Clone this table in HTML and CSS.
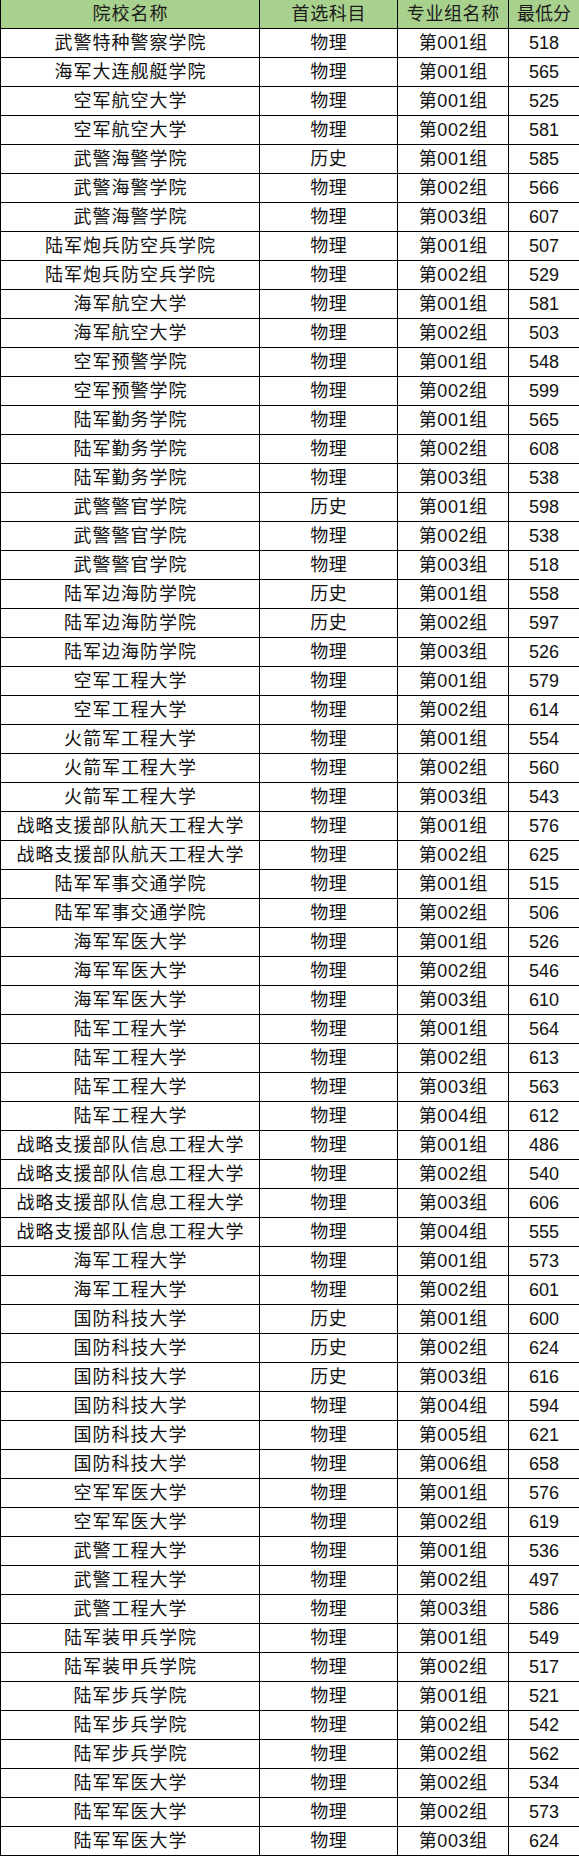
FILE: index.html
```html
<!DOCTYPE html>
<html lang="zh-CN">
<head>
<meta charset="utf-8">
<title>院校最低分</title>
<link rel="stylesheet" href="styles.css">
</head>
<body>
<table class="score-table">
<colgroup>
<col class="c-name"><col class="c-subj"><col class="c-group"><col class="c-score">
</colgroup>
<thead>
<tr><th class="name">院校名称</th><th>首选科目</th><th>专业组名称</th><th class="score">最低分</th></tr>
</thead>
<tbody>
<tr><td class="name">武警特种警察学院</td><td>物理</td><td>第001组</td><td class="score">518</td></tr>
<tr><td class="name">海军大连舰艇学院</td><td>物理</td><td>第001组</td><td class="score">565</td></tr>
<tr><td class="name">空军航空大学</td><td>物理</td><td>第001组</td><td class="score">525</td></tr>
<tr><td class="name">空军航空大学</td><td>物理</td><td>第002组</td><td class="score">581</td></tr>
<tr><td class="name">武警海警学院</td><td>历史</td><td>第001组</td><td class="score">585</td></tr>
<tr><td class="name">武警海警学院</td><td>物理</td><td>第002组</td><td class="score">566</td></tr>
<tr><td class="name">武警海警学院</td><td>物理</td><td>第003组</td><td class="score">607</td></tr>
<tr><td class="name">陆军炮兵防空兵学院</td><td>物理</td><td>第001组</td><td class="score">507</td></tr>
<tr><td class="name">陆军炮兵防空兵学院</td><td>物理</td><td>第002组</td><td class="score">529</td></tr>
<tr><td class="name">海军航空大学</td><td>物理</td><td>第001组</td><td class="score">581</td></tr>
<tr><td class="name">海军航空大学</td><td>物理</td><td>第002组</td><td class="score">503</td></tr>
<tr><td class="name">空军预警学院</td><td>物理</td><td>第001组</td><td class="score">548</td></tr>
<tr><td class="name">空军预警学院</td><td>物理</td><td>第002组</td><td class="score">599</td></tr>
<tr><td class="name">陆军勤务学院</td><td>物理</td><td>第001组</td><td class="score">565</td></tr>
<tr><td class="name">陆军勤务学院</td><td>物理</td><td>第002组</td><td class="score">608</td></tr>
<tr><td class="name">陆军勤务学院</td><td>物理</td><td>第003组</td><td class="score">538</td></tr>
<tr><td class="name">武警警官学院</td><td>历史</td><td>第001组</td><td class="score">598</td></tr>
<tr><td class="name">武警警官学院</td><td>物理</td><td>第002组</td><td class="score">538</td></tr>
<tr><td class="name">武警警官学院</td><td>物理</td><td>第003组</td><td class="score">518</td></tr>
<tr><td class="name">陆军边海防学院</td><td>历史</td><td>第001组</td><td class="score">558</td></tr>
<tr><td class="name">陆军边海防学院</td><td>历史</td><td>第002组</td><td class="score">597</td></tr>
<tr><td class="name">陆军边海防学院</td><td>物理</td><td>第003组</td><td class="score">526</td></tr>
<tr><td class="name">空军工程大学</td><td>物理</td><td>第001组</td><td class="score">579</td></tr>
<tr><td class="name">空军工程大学</td><td>物理</td><td>第002组</td><td class="score">614</td></tr>
<tr><td class="name">火箭军工程大学</td><td>物理</td><td>第001组</td><td class="score">554</td></tr>
<tr><td class="name">火箭军工程大学</td><td>物理</td><td>第002组</td><td class="score">560</td></tr>
<tr><td class="name">火箭军工程大学</td><td>物理</td><td>第003组</td><td class="score">543</td></tr>
<tr><td class="name">战略支援部队航天工程大学</td><td>物理</td><td>第001组</td><td class="score">576</td></tr>
<tr><td class="name">战略支援部队航天工程大学</td><td>物理</td><td>第002组</td><td class="score">625</td></tr>
<tr><td class="name">陆军军事交通学院</td><td>物理</td><td>第001组</td><td class="score">515</td></tr>
<tr><td class="name">陆军军事交通学院</td><td>物理</td><td>第002组</td><td class="score">506</td></tr>
<tr><td class="name">海军军医大学</td><td>物理</td><td>第001组</td><td class="score">526</td></tr>
<tr><td class="name">海军军医大学</td><td>物理</td><td>第002组</td><td class="score">546</td></tr>
<tr><td class="name">海军军医大学</td><td>物理</td><td>第003组</td><td class="score">610</td></tr>
<tr><td class="name">陆军工程大学</td><td>物理</td><td>第001组</td><td class="score">564</td></tr>
<tr><td class="name">陆军工程大学</td><td>物理</td><td>第002组</td><td class="score">613</td></tr>
<tr><td class="name">陆军工程大学</td><td>物理</td><td>第003组</td><td class="score">563</td></tr>
<tr><td class="name">陆军工程大学</td><td>物理</td><td>第004组</td><td class="score">612</td></tr>
<tr><td class="name">战略支援部队信息工程大学</td><td>物理</td><td>第001组</td><td class="score">486</td></tr>
<tr><td class="name">战略支援部队信息工程大学</td><td>物理</td><td>第002组</td><td class="score">540</td></tr>
<tr><td class="name">战略支援部队信息工程大学</td><td>物理</td><td>第003组</td><td class="score">606</td></tr>
<tr><td class="name">战略支援部队信息工程大学</td><td>物理</td><td>第004组</td><td class="score">555</td></tr>
<tr><td class="name">海军工程大学</td><td>物理</td><td>第001组</td><td class="score">573</td></tr>
<tr><td class="name">海军工程大学</td><td>物理</td><td>第002组</td><td class="score">601</td></tr>
<tr><td class="name">国防科技大学</td><td>历史</td><td>第001组</td><td class="score">600</td></tr>
<tr><td class="name">国防科技大学</td><td>历史</td><td>第002组</td><td class="score">624</td></tr>
<tr><td class="name">国防科技大学</td><td>历史</td><td>第003组</td><td class="score">616</td></tr>
<tr><td class="name">国防科技大学</td><td>物理</td><td>第004组</td><td class="score">594</td></tr>
<tr><td class="name">国防科技大学</td><td>物理</td><td>第005组</td><td class="score">621</td></tr>
<tr><td class="name">国防科技大学</td><td>物理</td><td>第006组</td><td class="score">658</td></tr>
<tr><td class="name">空军军医大学</td><td>物理</td><td>第001组</td><td class="score">576</td></tr>
<tr><td class="name">空军军医大学</td><td>物理</td><td>第002组</td><td class="score">619</td></tr>
<tr><td class="name">武警工程大学</td><td>物理</td><td>第001组</td><td class="score">536</td></tr>
<tr><td class="name">武警工程大学</td><td>物理</td><td>第002组</td><td class="score">497</td></tr>
<tr><td class="name">武警工程大学</td><td>物理</td><td>第003组</td><td class="score">586</td></tr>
<tr><td class="name">陆军装甲兵学院</td><td>物理</td><td>第001组</td><td class="score">549</td></tr>
<tr><td class="name">陆军装甲兵学院</td><td>物理</td><td>第002组</td><td class="score">517</td></tr>
<tr><td class="name">陆军步兵学院</td><td>物理</td><td>第001组</td><td class="score">521</td></tr>
<tr><td class="name">陆军步兵学院</td><td>物理</td><td>第002组</td><td class="score">542</td></tr>
<tr><td class="name">陆军步兵学院</td><td>物理</td><td>第002组</td><td class="score">562</td></tr>
<tr><td class="name">陆军军医大学</td><td>物理</td><td>第002组</td><td class="score">534</td></tr>
<tr><td class="name">陆军军医大学</td><td>物理</td><td>第002组</td><td class="score">573</td></tr>
<tr><td class="name">陆军军医大学</td><td>物理</td><td>第003组</td><td class="score">624</td></tr>
</tbody>
</table>
</body>
</html>
```

FILE: styles.css
```css
html, body {
  margin: 0;
  padding: 0;
  background: #ffffff;
}

.score-table {
  width: 579px;
  table-layout: fixed;
  border-collapse: collapse;
  font-family: "Liberation Sans", "Noto Sans CJK SC", sans-serif;
  font-size: 18px;
  color: #111111;
}

.c-name { width: 259px; }
.c-subj { width: 138px; }
.c-group { width: 111px; }
.c-score { width: 71px; }

.score-table th,
.score-table td {
  height: 28px;
  padding: 0;
  line-height: 28px;
  text-align: center;
  white-space: nowrap;
  border: 1px solid #000000;
  font-weight: normal;
  letter-spacing: 0.6px;
  text-indent: 0.6px;
}

.score-table .name {
  letter-spacing: 1px;
  text-indent: 1px;
}

.score-table .score {
  letter-spacing: 0;
  text-indent: 0;
}

.score-table th {
  background: #a9d18e;
  border-top: 0;
  color: #1a1a1a;
}
```
